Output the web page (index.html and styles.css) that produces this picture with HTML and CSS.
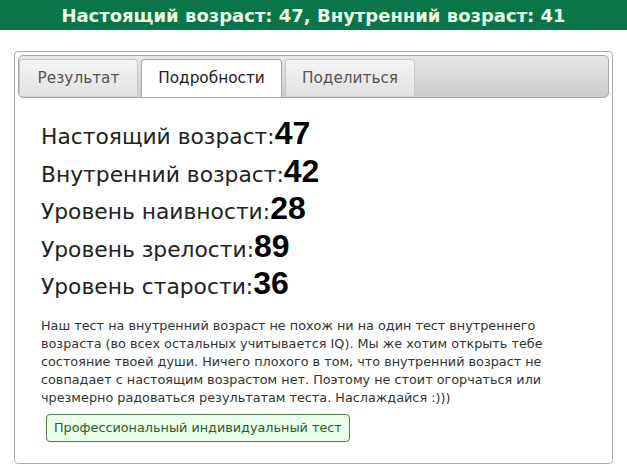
FILE: index.html
```html
<!DOCTYPE html>
<html lang="ru">
<head>
<meta charset="utf-8">
<link rel="stylesheet" href="styles.css">
</head>
<body>
<div class="header">Настоящий возраст: 47, Внутренний возраст: 41</div>
<div class="box">
  <div class="tabbar">
    <div class="tab">Результат</div>
    <div class="tab active">Подробности</div>
    <div class="tab">Поделиться</div>
  </div>
  <div class="content">
    <div class="stats">
      <div class="stat">Настоящий возраст:<b>47</b></div>
      <div class="stat">Внутренний возраст:<b>42</b></div>
      <div class="stat">Уровень наивности:<b>28</b></div>
      <div class="stat">Уровень зрелости:<b>89</b></div>
      <div class="stat">Уровень старости:<b>36</b></div>
    </div>
    <p class="desc">Наш тест на внутренний возраст не похож ни на один тест внутреннего возраста (во всех остальных учитывается IQ). Мы же хотим открыть тебе состояние твоей души. Ничего плохого в том, что внутренний возраст не совпадает с настоящим возрастом нет. Поэтому не стоит огорчаться или чрезмерно радоваться результатам теста. Наслаждайся :)))</p>
    <div class="btnrow"><span class="btn">Профессиональный индивидуальный тест</span></div>
  </div>
</div>
</body>
</html>
```
FILE: styles.css
```css
html, body {
  margin: 0;
  padding: 0;
  background: #fff;
}
.header {
  height: 30px;
  line-height: 31px;
  background: #097548;
  color: #e8ffe8;
  font-family: "DejaVu Sans", sans-serif;
  font-weight: bold;
  font-size: 18px;
  text-align: center;
}
.box {
  margin: 21px 0 0 14px;
  width: 591px;
  height: 405px;
  border: 1px solid #acacac;
  border-radius: 4px;
  padding: 3px;
}
.tabbar {
  height: 38px;
  border: 1px solid #a8a8a8;
  border-radius: 5px;
  background: linear-gradient(#e6e6e6, #cbcbcb);
  padding: 3px 0 0 0;
  display: flex;
  gap: 3px;
  font-family: "DejaVu Sans", sans-serif;
  font-size: 15.3px;
}
.tab {
  height: 37px;
  line-height: 36px;
  border: 1px solid #c6c6c6;
  border-bottom: none;
  border-radius: 4px 4px 0 0;
  background: linear-gradient(#f4f4f4, #e2e2e2);
  color: #555;
  box-sizing: border-box;
  text-align: center;
}
.tab:nth-child(1) { width: 119px; }
.tab:nth-child(2) { width: 141px; }
.tab:nth-child(3) { width: 130px; }
.tab.active {
  background: #fff;
  color: #222;
  border-color: #aaa;
  height: 38px;
  margin-bottom: -1px;
}
.content {
  padding: 17px 0 0 23px;
}
.stats {
  font-family: "DejaVu Sans", sans-serif;
  font-size: 21.8px;
  color: #222;
}
.stat {
  height: 37.5px;
  line-height: 37px;
}
.stat b {
  font-family: "Liberation Sans", Arial, sans-serif;
  font-size: 32px;
  color: #000;
}
.desc {
  margin: 14px 0 0 0;
  width: 522px;
  font-family: "DejaVu Sans", sans-serif;
  font-size: 12.8px;
  line-height: 18px;
  color: #333;
}
.btnrow {
  margin-top: 7px;
  padding-left: 5px;
  display: flex;
}
.btn {
  height: 26px;
  line-height: 26px;
  padding: 0 7px;
  border: 1px solid #4f7b4f;
  border-radius: 4px;
  background: #eaffe9;
  color: #2e5a2e;
  font-family: "DejaVu Sans", sans-serif;
  font-size: 12.8px;
}
```
